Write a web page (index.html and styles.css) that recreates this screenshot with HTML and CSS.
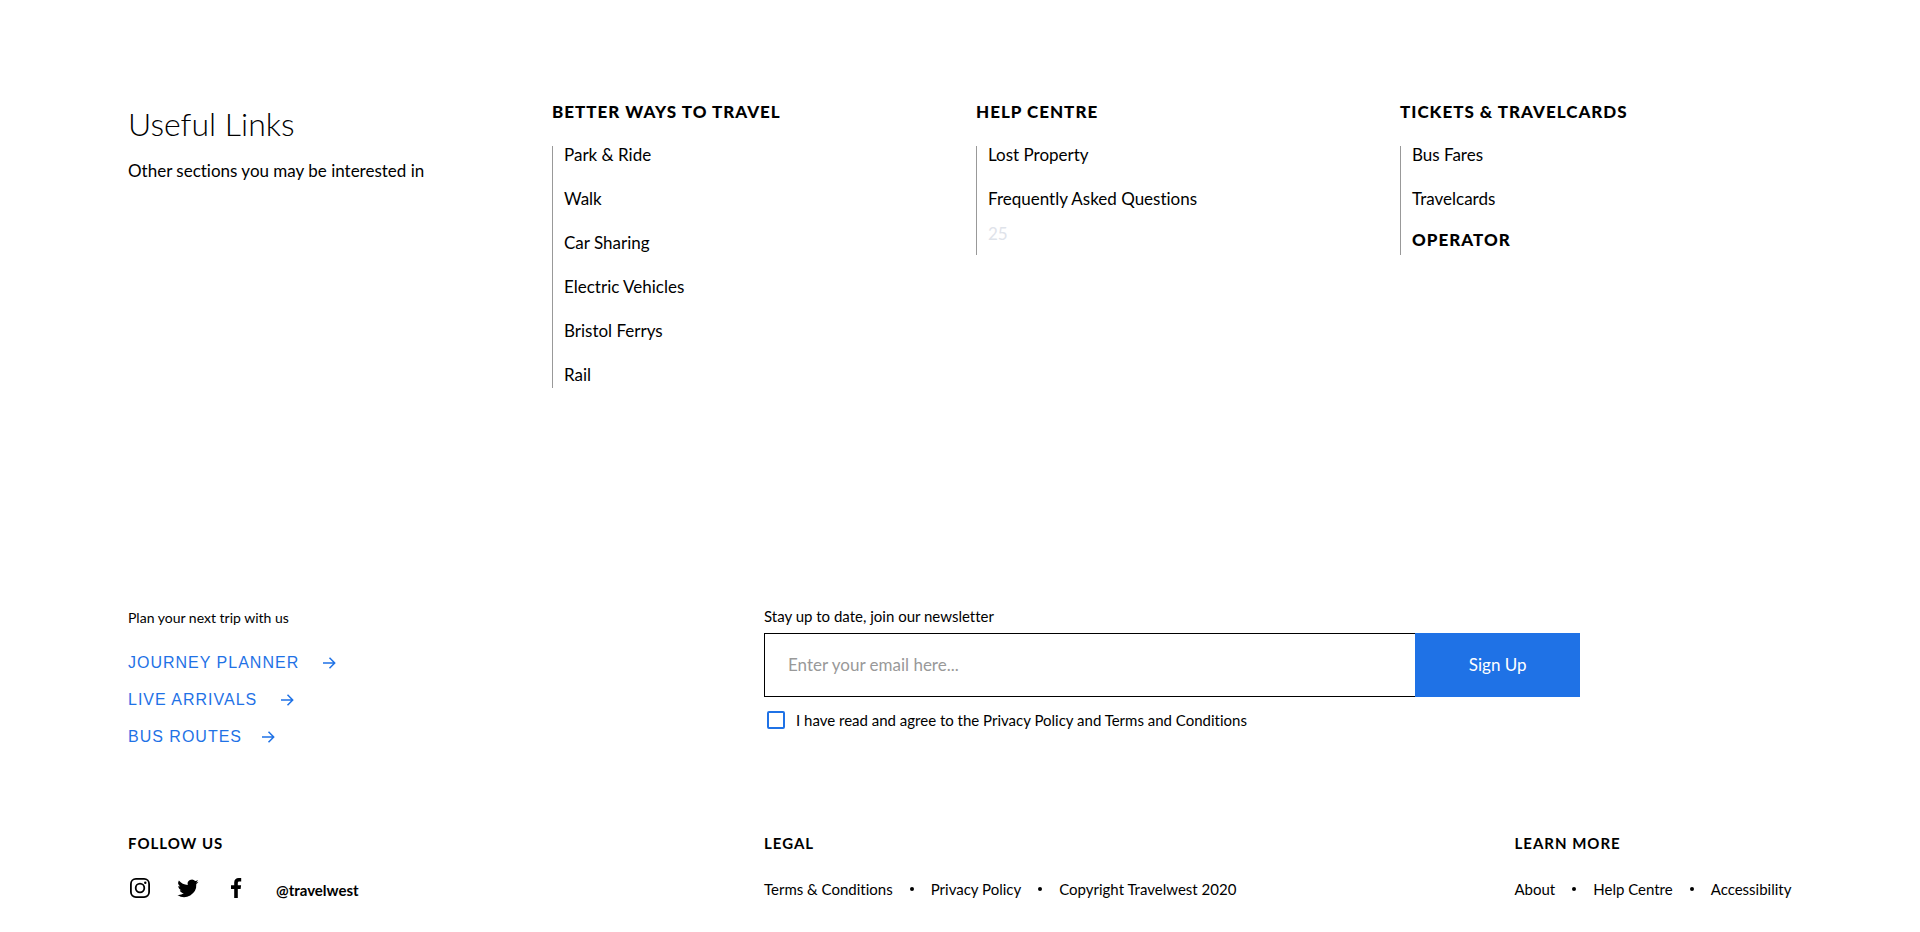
FILE: index.html
```html
<!DOCTYPE html>
<html lang="en">
<head>
<meta charset="utf-8">
<title>Travelwest</title>
<link rel="stylesheet" href="styles.css">
</head>
<body>
<footer class="footer">
  <nav class="links" aria-label="Useful links">
    <div class="intro">
      <h2 class="intro-title">Useful Links</h2>
      <p class="intro-text">Other sections you may be interested in</p>
    </div>
    <section>
      <h3 class="heading">BETTER WAYS TO TRAVEL</h3>
      <ul class="list">
        <li><a href="#">Park &amp; Ride</a></li>
        <li><a href="#">Walk</a></li>
        <li><a href="#">Car Sharing</a></li>
        <li><a href="#">Electric Vehicles</a></li>
        <li><a href="#">Bristol Ferrys</a></li>
        <li><a href="#">Rail</a></li>
      </ul>
    </section>
    <section>
      <h3 class="heading">HELP CENTRE</h3>
      <ul class="list">
        <li><a href="#">Lost Property</a></li>
        <li><a href="#">Frequently Asked Questions</a></li>
        <li class="count">25</li>
      </ul>
    </section>
    <section>
      <h3 class="heading">TICKETS &amp; TRAVELCARDS</h3>
      <ul class="list">
        <li><a href="#">Bus Fares</a></li>
        <li><a href="#">Travelcards</a></li>
        <li class="operator"><a href="#">OPERATOR</a></li>
      </ul>
    </section>
  </nav>

  <div class="row row-middle">
    <nav aria-label="Plan your trip">
      <p class="plan-title">Plan your next trip with us</p>
      <ul class="plan">
        <li><a href="#">JOURNEY PLANNER <svg class="arrow" viewBox="0 0 20 20"><path d="M4 10h12M10.500 4.800L15.700 10l-5.200 5.200"/></svg></a></li>
        <li><a href="#">LIVE ARRIVALS <svg class="arrow" viewBox="0 0 20 20"><path d="M4 10h12M10.500 4.800L15.700 10l-5.200 5.200"/></svg></a></li>
        <li><a class="plan-tight" href="#">BUS ROUTES <svg class="arrow" viewBox="0 0 20 20"><path d="M4 10h12M10.500 4.800L15.700 10l-5.200 5.200"/></svg></a></li>
      </ul>
    </nav>
    <form class="newsletter">
      <label class="newsletter-label" for="email">Stay up to date, join our newsletter</label>
      <div class="field">
        <input class="email" id="email" type="email" placeholder="Enter your email here...">
        <button class="submit" type="submit">Sign Up</button>
      </div>
      <div class="consent">
        <input class="check" id="agree" type="checkbox">
        <label for="agree">I have read and agree to the Privacy Policy and Terms and Conditions</label>
      </div>
    </form>
  </div>

  <div class="row row-bottom">
    <section>
      <h4 class="subheading">FOLLOW US</h4>
      <div class="social">
        <a href="#" aria-label="Instagram"><svg class="icon" viewBox="0 0 24 24" fill="none" stroke="currentColor" stroke-width="1.800"><rect x="2.900" y="2.900" width="18.200" height="18.200" rx="5"/><circle cx="12" cy="12" r="4.300"/><circle cx="17.300" cy="6.700" r="1.200" fill="currentColor" stroke="none"/></svg></a>
        <a href="#" aria-label="Twitter"><svg class="icon" viewBox="0 0 24 24" fill="currentColor"><path d="M22.500 5.700c-.8.300-1.600.6-2.500.7.900-.5 1.600-1.400 1.900-2.400-.8.500-1.800.9-2.700 1.100a4.300 4.300 0 0 0-7.400 4C8.200 8.900 5 7.200 2.900 4.600a4.300 4.300 0 0 0 1.300 5.800c-.7 0-1.400-.2-1.900-.5 0 2.200 1.500 3.900 3.400 4.300-.6.200-1.300.2-1.900.1.500 1.700 2.100 2.900 4 3A8.700 8.700 0 0 1 1.400 19a12.200 12.200 0 0 0 18.900-10.900c.9-.6 1.600-1.400 2.200-2.400z"/></svg></a>
        <a href="#" aria-label="Facebook"><svg class="icon" viewBox="0 0 24 24" fill="currentColor"><path d="M10.200 22v-9H7V9.300h3.200V6.500C10.200 3.500 12 2 14.700 2c1.200 0 2.200.1 2.500.1v3.400h-1.700c-1.400 0-1.700.7-1.700 1.700v2.100h3.300l-.5 3.700h-2.800v9z"/></svg></a>
        <a class="handle" href="#">@travelwest</a>
      </div>
    </section>
    <section>
      <h4 class="subheading">LEGAL</h4>
      <ul class="inline">
        <li><a href="#">Terms &amp; Conditions</a></li>
        <li><a href="#">Privacy Policy</a></li>
        <li>Copyright Travelwest 2020</li>
      </ul>
    </section>
    <section>
      <h4 class="subheading">LEARN MORE</h4>
      <ul class="inline">
        <li><a href="#">About</a></li>
        <li><a href="#">Help Centre</a></li>
        <li><a href="#">Accessibility</a></li>
      </ul>
    </section>
  </div>
</footer>
</body>
</html>
```
FILE: styles.css
```css
* { box-sizing: border-box; }

body {
  margin: 0;
  background: #fff;
  color: #000;
  font-family: Lato, "Open Sans", sans-serif;
  font-size: 17px;
  font-variant-ligatures: none;
  line-height: 18px;
}

h2, h3, h4, p, ul { margin: 0; padding: 0; }
ul { list-style: none; }
a { color: inherit; text-decoration: none; }

.footer { padding: 100px 96px 32px 128px; }

.links {
  display: grid;
  grid-template-columns: repeat(4, 1fr);
}
.intro { padding-top: 4px; }
.intro-title {
  font-size: 32px;
  font-weight: 300;
  line-height: 40px;
}
.intro-text { margin-top: 15px; line-height: 24px; }

.heading {
  margin-bottom: 22px;
  font-size: 17px;
  font-weight: 900;
  line-height: 24px;
  letter-spacing: 1px;
}
.list {
  min-height: 109px;
  padding: 0 0 4px 11px;
  border-left: 1px solid #999;
}
.list li + li { margin-top: 26px; }
.list li.count { margin-top: 17px; color: #dfe3ea; }
.list li.operator {
  margin-top: 23px;
  font-weight: 900;
  letter-spacing: 1px;
}

.row {
  display: grid;
  grid-template-columns: 37.5% 44.25% 1fr;
}
.row-middle { margin-top: 218px; }
.row-bottom { margin-top: 78px; white-space: nowrap; }

.plan-title {
  padding-top: 2px;
  font-size: 14px;
  line-height: 20px;
}
.plan {
  margin-top: 16px;
  color: #1f72e6;
  font-family: "Liberation Sans", Arial, sans-serif;
  font-size: 16px;
  letter-spacing: 1px;
}
.plan a {
  display: inline-flex;
  align-items: center;
  gap: 20px;
  height: 37px;
}
.plan .plan-tight { gap: 16px; }
.plan li { height: 37px; }
.arrow {
  width: 20px;
  height: 20px;
  fill: none;
  stroke: currentColor;
  stroke-width: 1.5;
}

.newsletter {
  grid-column: 2 / 4;
  width: 77%;
  font-size: 15px;
}
.newsletter-label {
  display: block;
  margin-bottom: 7px;
  line-height: 20px;
}
.field { display: flex; height: 64px; }
.email {
  flex: 1;
  min-width: 0;
  padding: 0 23px;
  border: 1px solid #000;
  border-right: 0;
  border-radius: 0;
  font: inherit;
  font-size: 17px;
}
.email::placeholder { color: #999; }
.submit {
  width: 165px;
  border: 0;
  background: #1f72e6;
  color: #fff;
  font: inherit;
  font-size: 17px;
}
.consent {
  display: flex;
  align-items: center;
  gap: 11px;
  padding: 14px 3px 0;
}
.check {
  appearance: none;
  width: 18px;
  height: 18px;
  margin: 0;
  border: 2px solid #1f72e6;
  border-radius: 2px;
}
.check:checked { background: #1f72e6; }

.subheading {
  font-size: 15px;
  font-weight: 700;
  line-height: 20px;
  letter-spacing: 1px;
}
.social {
  display: flex;
  align-items: center;
  gap: 24px;
  margin-top: 23px;
}
.icon { display: block; width: 24px; height: 24px; }
.handle {
  padding: 4px 0 0 4px;
  font-size: 15px;
  font-weight: 700;
}
.inline {
  display: flex;
  margin-top: 27px;
  font-size: 15px;
}
.inline li { display: flex; align-items: center; }
.inline li + li::before {
  content: "";
  width: 4px;
  height: 4px;
  margin: 0 17px;
  border-radius: 50%;
  background: #000;
}
```
